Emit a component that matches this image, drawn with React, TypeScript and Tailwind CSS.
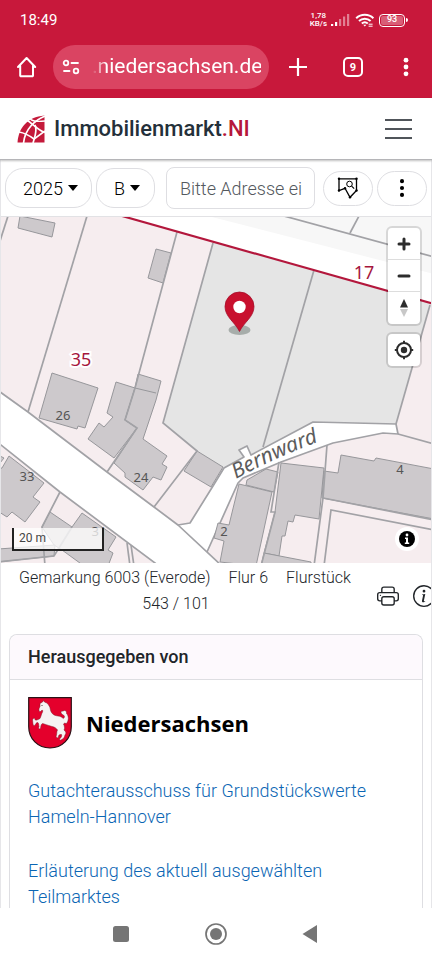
import type { ReactNode } from 'react'
import {
  BsInfoCircle,
  BsPrinter,
  BsThreeDotsVertical,
} from 'react-icons/bs'

const buildings = [
  '20,216 55,223 52,237 18,228',
  '156,249 171,253 163,283 148,278',
  '52,373 98,388 85,428 78,426 77,429 39,418',
  '116,382 135,388 125,420 137,428 114,458 88,439 99,423 104,427 113,417 107,413',
  '135,388 138,374 161,381 156,400 143,439 167,456 162,464 167,467 161,480 153,477 143,490 125,477 125,473 114,463 137,428 125,420',
  '197,451 223,467 211,487 184,471',
  '-4,454 4,458 -4,468',
  '9,456 44,483 33,497 40,502 25,522 12,512 7,517 -4,510 -4,470 2,468',
  '50,512 72,527 82,513 116,537 108,550 113,553 108,566 84,566 62,550 54,545 42,527',
  '-2,549 55,545 54,556 -2,562',
  '247,480 266,469 278,472 274,492 246,485',
  '239,484 272,492 256,566 220,562 224,541 214,538 218,523 229,525',
  '281,463 324,468 319,519 295,515 293,522 288,521 285,536 282,536 279,556 264,553 275,512',
  '264,553 311,562 311,566 261,566',
  '341,455 374,461 376,458 434,469 434,519 322,498 324,471 338,473',
]

const boundaries = [
  '8,216 0,241',
  '87,216 28,412',
  '177,232 135,388 125,420 137,428 107,472',
  '213,243 163,423 197,451 154,507',
  '314,270 263,447',
  '430,305 396,424',
  '284,216 434,257',
  '359,216 350,233',
  '398,434 434,444',
  '60,492 42,527 45,566',
  '-2,562 54,556 72,527',
  '127,543 130,566',
  '131,545 134,566',
  '279,462 271,512 275,512 261,566',
  '327,445 323,498 314,566',
  '323,498 434,520',
  '324,566 331,510 434,530',
]

const numbers = [
  { label: '26', x: 63, y: 420 },
  { label: '24', x: 141, y: 482 },
  { label: '33', x: 27, y: 481 },
  { label: '31', x: 99, y: 536 },
  { label: '2', x: 224, y: 536 },
  { label: '4', x: 400, y: 474 },
]

function StatusBar() {
  return (
    <div className="flex h-9 items-end justify-between pr-6 pl-5 text-white">
      <span className="text-[15px] leading-8">18:49</span>
      <div className="flex h-8 items-center gap-1">
        <span className="text-center text-[8px] leading-[8px] font-medium">
          1,78
          <br />
          KB/s
        </span>
        <svg className="h-3 w-5" viewBox="0 0 20 12" fill="white">
          <rect x="0" y="10" width="2.2" height="2" />
          <rect x="4" y="8" width="2.2" height="4" />
          <rect x="8" y="5" width="2.2" height="7" opacity=".45" />
          <rect x="12" y="2.5" width="2.2" height="9.5" opacity=".45" />
          <rect x="16" y="0" width="2.2" height="12" opacity=".45" />
        </svg>
        <svg className="h-[14px] w-5" viewBox="0 0 20 14" fill="none" stroke="white" strokeWidth="2">
          <path d="M1.2 5.2a12.5 12.5 0 0 1 17.2 0" />
          <path d="M4 8a8.6 8.6 0 0 1 11.6 0" />
          <path d="M6.8 10.6a4.6 4.6 0 0 1 6 0" />
          <path d="M8.2 11.8 9.8 13.6l1.6-1.8z" fill="white" stroke="none" />
          <path d="M13.6 11.2h4m-4 2h4" strokeWidth="1" />
        </svg>
        <div className="flex items-center">
          <div className="flex h-[13px] w-[26px] items-center rounded-[4px] border border-white p-px">
            <span className="flex h-full w-full items-center justify-center rounded-[2px] bg-white/30 text-[9px] font-medium">
              93
            </span>
          </div>
          <span className="ml-px h-1 w-[2px] rounded-r bg-white" />
        </div>
      </div>
    </div>
  )
}

function BrowserBar() {
  return (
    <div className="flex h-[62px] items-center px-4 text-white">
      <button type="button" aria-label="Startseite" className="w-[22px]">
        <svg viewBox="0 0 22 22" className="size-[22px]" fill="none" stroke="currentColor" strokeWidth="2" strokeLinejoin="round" strokeLinecap="round">
          <path d="M2 11 10.6 2 19.2 11M4.2 9.5V19.4a.8.8 0 0 0 .8.8H16.2a.8.8 0 0 0 .8-.8V9.5" />
        </svg>
      </button>
      <div className="ml-[15px] flex h-11 min-w-0 flex-1 items-center gap-3 rounded-full bg-[#da4462] pr-2 pl-[9px]">
        <svg viewBox="0 0 18 16" className="h-4 w-[18px] shrink-0" fill="none" stroke="currentColor" strokeWidth="1.8" strokeLinecap="round">
          <circle cx="4" cy="4" r="2.3" />
          <path d="M9.5 4h6.5M2 12h5.5" />
          <circle cx="14" cy="12" r="2.3" />
        </svg>
        <input
          type="text"
          aria-label="Adresse der Webseite"
          defaultValue=".niedersachsen.de"
          className="w-full min-w-0 bg-transparent text-[21px] outline-none [mask-image:linear-gradient(to_right,transparent,black_14px)]"
        />
      </div>
      <button type="button" aria-label="Neuer Tab" className="ml-5 w-[18px]">
        <svg viewBox="0 0 18 18" className="size-[18px]" stroke="currentColor" strokeWidth="2.2">
          <path d="M9 0v18M0 9h18" />
        </svg>
      </button>
      <button
        type="button"
        aria-label="9 offene Tabs"
        className="ml-9 flex size-5 items-center justify-center rounded-[5px] border-2 border-white text-[11px] leading-none font-bold"
      >
        9
      </button>
      <button type="button" aria-label="Menü" className="ml-[33px] w-5">
        <svg viewBox="0 0 20 20" className="size-5" fill="currentColor">
          <circle cx="10" cy="3.2" r="2.4" />
          <circle cx="10" cy="10" r="2.4" />
          <circle cx="10" cy="16.8" r="2.4" />
        </svg>
      </button>
    </div>
  )
}

function BrandLogo() {
  return (
    <svg viewBox="0 0 28 28" className="size-7">
      <path d="M27.5.5V27.5H.5C1.500 13 10 2 27.500.5z" fill="#c41a3b" />
      <g fill="none" stroke="white" strokeWidth="1.7">
        <path d="M12 3C15 6 18 7 28 6" strokeWidth="1.4" />
        <path d="M28 1C18 5 8 14 6.500 28" />
        <path d="M10 5C17 10 22 16 28 17.500" />
        <path d="M18 10C20.500 15 18 22 16 28" />
        <path d="M2 17C8 18 13 21 17 24 20 22 24 19 28 16" />
      </g>
    </svg>
  )
}

function SiteHeader() {
  return (
    <header className="relative z-10 flex h-[62px] shrink-0 items-center border-b border-[#b5b5b8] bg-white pr-5 pl-[17px] shadow-[0_1px_2px_rgba(0,0,0,0.25)]">
      <a href="#start" className="flex flex-1 items-center gap-[9px] text-[22px] font-medium text-[#24303a]">
        <BrandLogo />
        <span>
          Immobilienmarkt<span className="text-[#b5173b]">.NI</span>
        </span>
      </a>
      <button type="button" aria-label="Navigation" className="flex w-[27px] flex-col gap-[7px]">
        <span className="h-[2px] w-full bg-[#50555a]" />
        <span className="h-[2px] w-full bg-[#50555a]" />
        <span className="h-[2px] w-full bg-[#50555a]" />
      </button>
    </header>
  )
}

interface PillSelectProps {
  label: string
  value: string
  className: string
}

function PillSelect({ label, value, className }: PillSelectProps) {
  return (
    <label className={`flex h-10 shrink-0 items-center rounded-[18px] border border-[#dedee2] pl-[17px] ${className}`}>
      <select
        aria-label={label}
        defaultValue={value}
        className="min-w-0 flex-1 appearance-none bg-transparent text-[18px] font-light text-black outline-none"
      >
        <option>{value}</option>
      </select>
      <svg viewBox="0 0 10 6" className="h-[6px] w-[10px] shrink-0">
        <path d="M0 0h10L5 6z" fill="black" />
      </svg>
    </label>
  )
}

function Toolbar() {
  return (
    <div className="flex h-[57px] shrink-0 items-center border-b border-[#e2e2e5] px-1">
      <PillSelect label="Jahr" value="2025" className="w-[87px] pr-[13px]" />
      <PillSelect label="Teilmarkt" value="B" className="ml-1 w-[59px] pr-[14px]" />
      <input
        type="text"
        aria-label="Adresse"
        placeholder="Bitte Adresse ei"
        className="ml-[11px] h-[42px] min-w-0 flex-1 rounded-lg border border-[#dedee2] pr-2 pl-[13px] text-[18px] font-light outline-none placeholder:text-[#54595e]"
      />
      <button
        type="button"
        aria-label="Suche im Gebiet"
        className="ml-2 flex h-[35px] w-[50px] shrink-0 items-center justify-center rounded-full border border-[#dedee2]"
      >
        <svg viewBox="0 0 22 22" className="size-[22px]" fill="none" stroke="black" strokeWidth="1.3">
          <path d="M2 1.800H19.500V13.500L13 20.300 8 11.300 2 13.500z" />
          <g fill="black" stroke="none">
            <circle cx="2" cy="1.800" r="1.200" />
            <circle cx="19.500" cy="1.800" r="1.200" />
            <circle cx="19.500" cy="13.500" r="1.200" />
            <circle cx="13" cy="20.300" r="1.200" />
            <circle cx="8" cy="11.300" r="1.200" />
            <circle cx="2" cy="13.500" r="1.200" />
          </g>
          <circle cx="12.500" cy="7" r="2.800" strokeWidth="1" />
          <path d="m14.600 9.100 2.600 2.600" strokeWidth="1.100" />
        </svg>
      </button>
      <button
        type="button"
        aria-label="Weitere Optionen"
        className="ml-1 flex h-[35px] w-[50px] shrink-0 items-center justify-center rounded-full border border-[#dedee2]"
      >
        <BsThreeDotsVertical className="size-[22px] text-black" />
      </button>
    </div>
  )
}

interface MapButtonProps {
  label: string
  children: ReactNode
}

function MapButton({ label, children }: MapButtonProps) {
  return (
    <button type="button" aria-label={label} className="flex h-8 w-8 items-center justify-center">
      {children}
    </button>
  )
}

function ParcelMap() {
  return (
    <svg viewBox="0 217 432 346" preserveAspectRatio="xMidYMid slice" className="block w-full">
      <rect x="-10" y="200" width="460" height="380" fill="#f6edef" />

      <path d="M122 216 432 303V216z" fill="white" />
      <path d="M208 216 434 274V216z" fill="#f7f7f7" />
      <path
        d="M213 242 434 304 430 305 396 424 313 422 251 455 224 468 197 451 163 423z"
        fill="#e5e5e5"
      />

      {/* streets */}
      <path
        d="M-4 389 28 412 107 472 154 507 178 525 190 523 213 486 224 468 244 457 239 450 247 446 251 455 313 422 396 424 398 434 383 433 333 443 281 462 243 478 238 483 207 552 225 567H159L60 492-4 441z"
        fill="white"
      />
      <g fill="none" stroke="#a2a2a6" strokeWidth="1.700" strokeLinejoin="round">
        <path d="M-4 389 28 412 107 472 154 507 178 525 190 523 213 486 224 468 244 457 239 450 247 446 251 455 313 422 396 424 398 434 383 433 333 443 281 462 243 478 238 483 207 552" />
        <path d="M178 525 222 566M159 566 60 492-4 441" />
      </g>

      <g fill="#cdc9cc" stroke="#97979b" strokeWidth="1">
        {buildings.map((points) => (
          <polygon key={points} points={points} />
        ))}
        <path d="M135 388 156 393" />
      </g>
      <g fill="none" stroke="#a2a2a6" strokeWidth="1.700">
        {boundaries.map((points) => (
          <polyline key={points} points={points} />
        ))}
      </g>

      <path d="M122 216 434 304" stroke="#b3173c" strokeWidth="2.200" />

      <g fontFamily="'Noto Sans', sans-serif" textAnchor="middle">
        <g fontSize="13" fill="#555">
          {numbers.map(({ label, x, y }) => (
            <text key={label} x={x} y={y}>
              {label}
            </text>
          ))}
        </g>
        <g fontSize="18" fill="#a5163d" stroke="white" strokeWidth="4" paintOrder="stroke">
          <text x="81" y="366">35</text>
          <text x="364" y="279">17</text>
        </g>
      </g>
      <path id="street" d="M236 479Q276 457 326 439" fill="none" />
      <text fontFamily="'Noto Sans', sans-serif" fontStyle="italic" fontSize="21" fill="#5c5c5c">
        <textPath href="#street">Bernward</textPath>
      </text>

      <ellipse cx="239.500" cy="330" rx="11" ry="5" fill="#8d9692" opacity=".7" />
      <path
        d="M239.500 331.500C235 322 225 317 225 306.500a14.500 14.500 0 0 1 29 0C254 317 244 322 239.500 331.500z"
        fill="#c8102e"
        stroke="#a50f2b"
        strokeWidth=".8"
      />
      <circle cx="239.500" cy="307" r="6.200" fill="white" />
    </svg>
  )
}

function MapPanel() {
  return (
    <section className="relative -mx-px shrink-0 overflow-hidden text-[#2c2c2c]">
      <ParcelMap />
      <div className="absolute top-[11px] right-3 flex flex-col gap-[10px]">
        <div className="divide-y divide-[#ddd] rounded bg-white shadow-[0_0_0_2px_rgba(0,0,0,0.13)]">
          <MapButton label="Vergrößern">
            <svg viewBox="0 0 14 14" className="size-[14px]" stroke="currentColor" strokeWidth="3" strokeLinecap="round">
              <path d="M7 2v10M2 7h10" />
            </svg>
          </MapButton>
          <MapButton label="Verkleinern">
            <svg viewBox="0 0 14 14" className="size-[14px]" stroke="currentColor" strokeWidth="3" strokeLinecap="round">
              <path d="M2 7h10" />
            </svg>
          </MapButton>
          <MapButton label="Nach Norden ausrichten">
            <svg viewBox="0 0 10 20" className="h-5 w-[10px]">
              <path d="M1 9.500 5 1l4 8.500z" fill="#2c2c2c" />
              <path d="M1 11h8l-4 8z" fill="#c8c8c8" />
            </svg>
          </MapButton>
        </div>
        <div className="rounded bg-white shadow-[0_0_0_2px_rgba(0,0,0,0.13)]">
          <MapButton label="Standort">
            <svg viewBox="0 0 20 20" className="size-5" fill="none" stroke="currentColor" strokeWidth="2">
              <circle cx="10" cy="10" r="7" />
              <circle cx="10" cy="10" r="3.200" fill="currentColor" stroke="none" />
              <path d="M10 .8v3M10 16.200v3M.8 10h3M16.200 10h3" />
            </svg>
          </MapButton>
        </div>
      </div>
      <div className="absolute bottom-3 left-3 h-[23px] w-[92px] border-2 border-t-0 border-[#222] bg-white/75 pl-[5px] text-xs leading-[20px] text-[#444]">
        20 m
      </div>
      <button
        type="button"
        aria-label="Quellenangabe"
        className="absolute right-[13px] bottom-3 flex size-6 items-center justify-center rounded-full bg-white"
      >
        <svg viewBox="0 0 16 16" className="size-4">
          <circle cx="8" cy="8" r="8" fill="black" />
          <path d="M6 6.500h3v5h1.200V13H5.800v-1.500H7V8H6z" fill="white" />
          <circle cx="8" cy="4" r="1.400" fill="white" />
        </svg>
      </button>
    </section>
  )
}

function ParcelInfo() {
  return (
    <div className="flex h-[71px] shrink-0 items-start overflow-hidden">
      <div className="flex min-w-0 flex-1 flex-wrap justify-center gap-x-[18px] pt-[2px] text-base leading-[26px] font-light text-[#212529]">
        <span>Gemarkung 6003 (Everode)</span>
        <span>Flur 6</span>
        <span>Flurstück</span>
        <span className="mr-[18px]">543 / 101</span>
      </div>
      <div className="-mr-1 flex shrink-0 gap-[14px] pt-[22px] pl-2 text-[#212529]">
        <button type="button" aria-label="Drucken">
          <BsPrinter className="size-[22px]" />
        </button>
        <button type="button" aria-label="Information">
          <BsInfoCircle className="size-[22px]" />
        </button>
      </div>
    </div>
  )
}

function CoatOfArms() {
  return (
    <svg viewBox="0 0 44 52" className="h-[52px] w-11">
      <path d="M.7.7H43.300V29.500C43.300 42 34 51 22 51S.7 42 .7 29.500z" fill="#e4002c" stroke="#2a1116" strokeWidth="1.200" />
      <path
        d="M12 6.500 14.500 5 15.500 3.500 16.500 5C20 6 22 9 22.500 13 23.500 17 26 18.500 30 19 32 19.200 34 20 35.200 21.500 37.500 20 36.500 18.500 34.500 17.500 32 16 33 13.500 35 14.200 36.500 12.500 39 14 38.500 16.500 41 19 41 24 38 27 37.500 25.500 36.500 26 35.500 27 36.500 29 37 31.500 36 33 38 34.500 38.500 36.500 37 38 36.500 40 35.500 42 33 43 31.500 43.500 31 42.500 32.500 41 33.500 40 34 38.500 33.500 37.500 31 37 30 39 30.500 40.500 28.500 41.500 27.500 40 28.500 38 29 36 28.500 34.500 29.500 33 28.500 31.500 27 30 24 29.500 19 28 16.500 27 14.500 26.500 12.500 27.500 13 29.500 12.500 31.500 11.500 32.500 10 31.500 11 29.500 10.500 27.500 11 25.500 9 25.500 7.500 26.500 7.500 28 6 29 4.500 27.500 5 25.500 4.500 23 5 21 7 20.500 7 22.500 7.500 24 9.500 22.500 11.500 22 13 20.500 13 17.500 14.500 15 15.500 12.500 13.500 13 12 15 10.500 14 10.500 12 12 9.500z"
        fill="#f6f3f3"
        stroke="#7a1a2b"
        strokeWidth=".5"
      />
      <circle cx="14" cy="8.500" r=".6" fill="#333" />
    </svg>
  )
}

function PublisherCard() {
  return (
    <section className="mx-2 min-h-0 flex-1 rounded-t-lg border border-b-0 border-[#dedee2]">
      <h2 className="rounded-t-lg border-b border-[#dedee2] bg-[#fdf9fd] px-[18px] py-[9px] text-[18px] leading-[26px] font-medium text-[#212529]">
        Herausgegeben von
      </h2>
      <div className="px-[18px] pt-[17px] text-[18px] leading-[26px] font-light text-[#0b66b4]">
        <div className="flex items-center gap-[14px]">
          <CoatOfArms />
          <span className="font-['Open_Sans',sans-serif] text-[22px] leading-none font-bold text-black">
            Niedersachsen
          </span>
        </div>
        <p className="mt-7 pt-px">
          <a href="#gutachterausschuss">Gutachterausschuss für Grundstückswerte Hameln-Hannover</a>
        </p>
        <p className="mt-7">
          <a href="#erlaeuterung">Erläuterung des aktuell ausgewählten Teilmarktes</a>
        </p>
      </div>
    </section>
  )
}

function SystemNav() {
  return (
    <nav className="flex h-[52px] shrink-0 items-center justify-center gap-[73px] bg-white text-[#757575]">
      <button type="button" aria-label="Letzte Apps">
        <svg viewBox="0 0 22 22" className="size-[22px]" fill="currentColor">
          <rect x="3" y="3" width="16" height="16" rx="2.500" />
        </svg>
      </button>
      <button type="button" aria-label="Home">
        <svg viewBox="0 0 22 22" className="size-[22px]" fill="currentColor">
          <circle cx="11" cy="11" r="10" fill="none" stroke="currentColor" strokeWidth="1.700" />
          <circle cx="11" cy="11" r="6" />
        </svg>
      </button>
      <button type="button" aria-label="Zurück">
        <svg viewBox="0 0 22 22" className="size-[22px]" fill="currentColor">
          <path d="M2.500 11 17 2v18z" />
        </svg>
      </button>
    </nav>
  )
}

export default function App() {
  return (
    <div className="flex h-screen flex-col overflow-hidden bg-white font-[Roboto,sans-serif]">
      <div className="shrink-0 bg-[#c8183b]">
        <StatusBar />
        <BrowserBar />
      </div>
      <SiteHeader />
      <main className="flex min-h-0 flex-1 flex-col overflow-hidden border-x border-[#e6e6e9]">
        <Toolbar />
        <MapPanel />
        <ParcelInfo />
        <PublisherCard />
      </main>
      <SystemNav />
    </div>
  )
}
